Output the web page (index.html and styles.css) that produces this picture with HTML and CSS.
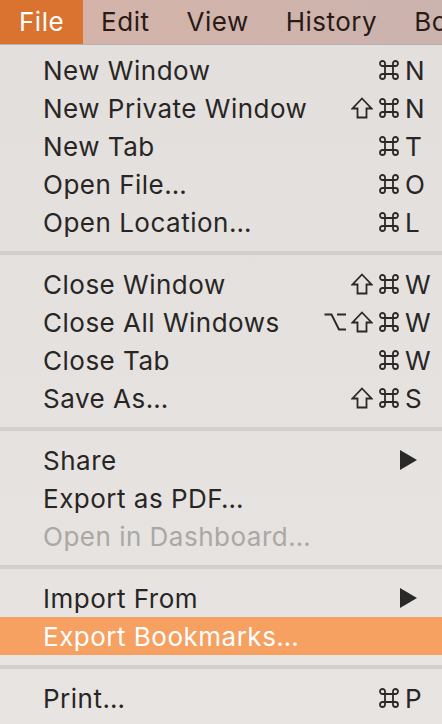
FILE: index.html
```html
<!DOCTYPE html>
<html lang="en">
<head>
<meta charset="utf-8">
<title>File menu</title>
<link rel="stylesheet" href="styles.css">
</head>
<body>
<svg class="defs" width="0" height="0" aria-hidden="true">
  <defs>
    <symbol id="cmd" viewBox="0 0 22 22"><path d="M7 7V4.5A2.5 2.5 0 1 0 4.5 7H17.5A2.5 2.5 0 1 0 15 4.5V17.5A2.5 2.5 0 1 0 17.5 15H4.5A2.5 2.5 0 1 0 7 17.5Z" fill="none" stroke="currentColor" stroke-width="1.8" stroke-linejoin="round"/></symbol>
    <symbol id="shift" viewBox="0 0 22 22"><path d="M11 1.5L20.5 11.5H15.5V20.5H6.5V11.5H1.5Z" fill="none" stroke="currentColor" stroke-width="1.8" stroke-linejoin="miter"/></symbol>
    <symbol id="opt" viewBox="0 0 22 22"><path d="M0.5 3.5H7.5L15 18.5H22.5M13 3.5H22.5" fill="none" stroke="currentColor" stroke-width="1.9"/></symbol>
  </defs>
</svg>
<div class="menubar">
  <span class="mb-item active">File</span>
  <span class="mb-item">Edit</span>
  <span class="mb-item">View</span>
  <span class="mb-item">History</span>
  <span class="mb-item">Bo</span>
</div>
<div class="menu">
  <div class="row"><span class="label">New Window</span><span class="sc"><span class="mods"><svg class="m"><use href="#cmd"/></svg></span><span class="key">N</span></span></div>
  <div class="row"><span class="label">New Private Window</span><span class="sc"><span class="mods"><svg class="m"><use href="#shift"/></svg><svg class="m"><use href="#cmd"/></svg></span><span class="key">N</span></span></div>
  <div class="row"><span class="label">New Tab</span><span class="sc"><span class="mods"><svg class="m"><use href="#cmd"/></svg></span><span class="key">T</span></span></div>
  <div class="row"><span class="label">Open File…</span><span class="sc"><span class="mods"><svg class="m"><use href="#cmd"/></svg></span><span class="key">O</span></span></div>
  <div class="row"><span class="label">Open Location…</span><span class="sc"><span class="mods"><svg class="m"><use href="#cmd"/></svg></span><span class="key">L</span></span></div>
  <div class="sep"></div>
  <div class="row"><span class="label">Close Window</span><span class="sc"><span class="mods"><svg class="m"><use href="#shift"/></svg><svg class="m"><use href="#cmd"/></svg></span><span class="key">W</span></span></div>
  <div class="row"><span class="label">Close All Windows</span><span class="sc"><span class="mods"><svg class="m"><use href="#opt"/></svg><svg class="m"><use href="#shift"/></svg><svg class="m"><use href="#cmd"/></svg></span><span class="key">W</span></span></div>
  <div class="row"><span class="label">Close Tab</span><span class="sc"><span class="mods"><svg class="m"><use href="#cmd"/></svg></span><span class="key">W</span></span></div>
  <div class="row"><span class="label">Save As…</span><span class="sc"><span class="mods"><svg class="m"><use href="#shift"/></svg><svg class="m"><use href="#cmd"/></svg></span><span class="key">S</span></span></div>
  <div class="sep"></div>
  <div class="row"><span class="label">Share</span><span class="arrow"></span></div>
  <div class="row"><span class="label">Export as PDF…</span></div>
  <div class="row disabled"><span class="label">Open in Dashboard…</span></div>
  <div class="sep"></div>
  <div class="row"><span class="label">Import From</span><span class="arrow"></span></div>
  <div class="row selected"><span class="label">Export Bookmarks…</span></div>
  <div class="sep"></div>
  <div class="row"><span class="label">Print…</span><span class="sc"><span class="mods"><svg class="m"><use href="#cmd"/></svg></span><span class="key">P</span></span></div>
</div>
</body>
</html>
```
FILE: styles.css
```css
html, body {
  margin: 0;
  padding: 0;
}
body {
  width: 442px;
  height: 724px;
  overflow: hidden;
  background: #e3e0de;
  font-family: "Inter", "Liberation Sans", sans-serif;
  font-size: 26px;
  letter-spacing: 0.5px;
  color: #282624;
}
.defs {
  position: absolute;
  width: 0;
  height: 0;
}
.menubar {
  height: 44px;
  display: flex;
  white-space: nowrap;
  overflow: hidden;
  background: linear-gradient(to right, #d6b4a8, #cbb3ae);
  border-bottom: 1px solid #b8b0ad;
}
.mb-item {
  padding: 0 18.5px;
  line-height: 44px;
  color: #2a1a16;
}
.mb-item.active {
  padding-left: 19px;
  background: #d9732f;
  color: #ffffff;
}
.menu {
  padding: 6px 0 7px;
  background: linear-gradient(to bottom, #e2dfdd, #e7e4e2);
}
.row {
  height: 38px;
  display: flex;
  align-items: center;
  padding-left: 43px;
  white-space: nowrap;
}
.row .label {
  flex: 1;
}
.row.disabled {
  color: #aaa8a6;
}
.row.selected {
  background: #f6a061;
  color: #ffffff;
}
.sep {
  height: 4px;
  margin: 10px 0;
  background: #d2d0ce;
}
.sc {
  display: flex;
  align-items: center;
}
.mods {
  display: flex;
  align-items: center;
  gap: 5px;
  margin-right: 5px;
  color: #2b2927;
}
.m {
  width: 22px;
  height: 22px;
  display: block;
}
.key {
  width: 26px;
  padding-right: 11px;
}
.arrow {
  width: 0;
  height: 0;
  border-top: 10.5px solid transparent;
  border-bottom: 10.5px solid transparent;
  border-left: 17px solid #2b2927;
  margin-right: 25px;
}
```
